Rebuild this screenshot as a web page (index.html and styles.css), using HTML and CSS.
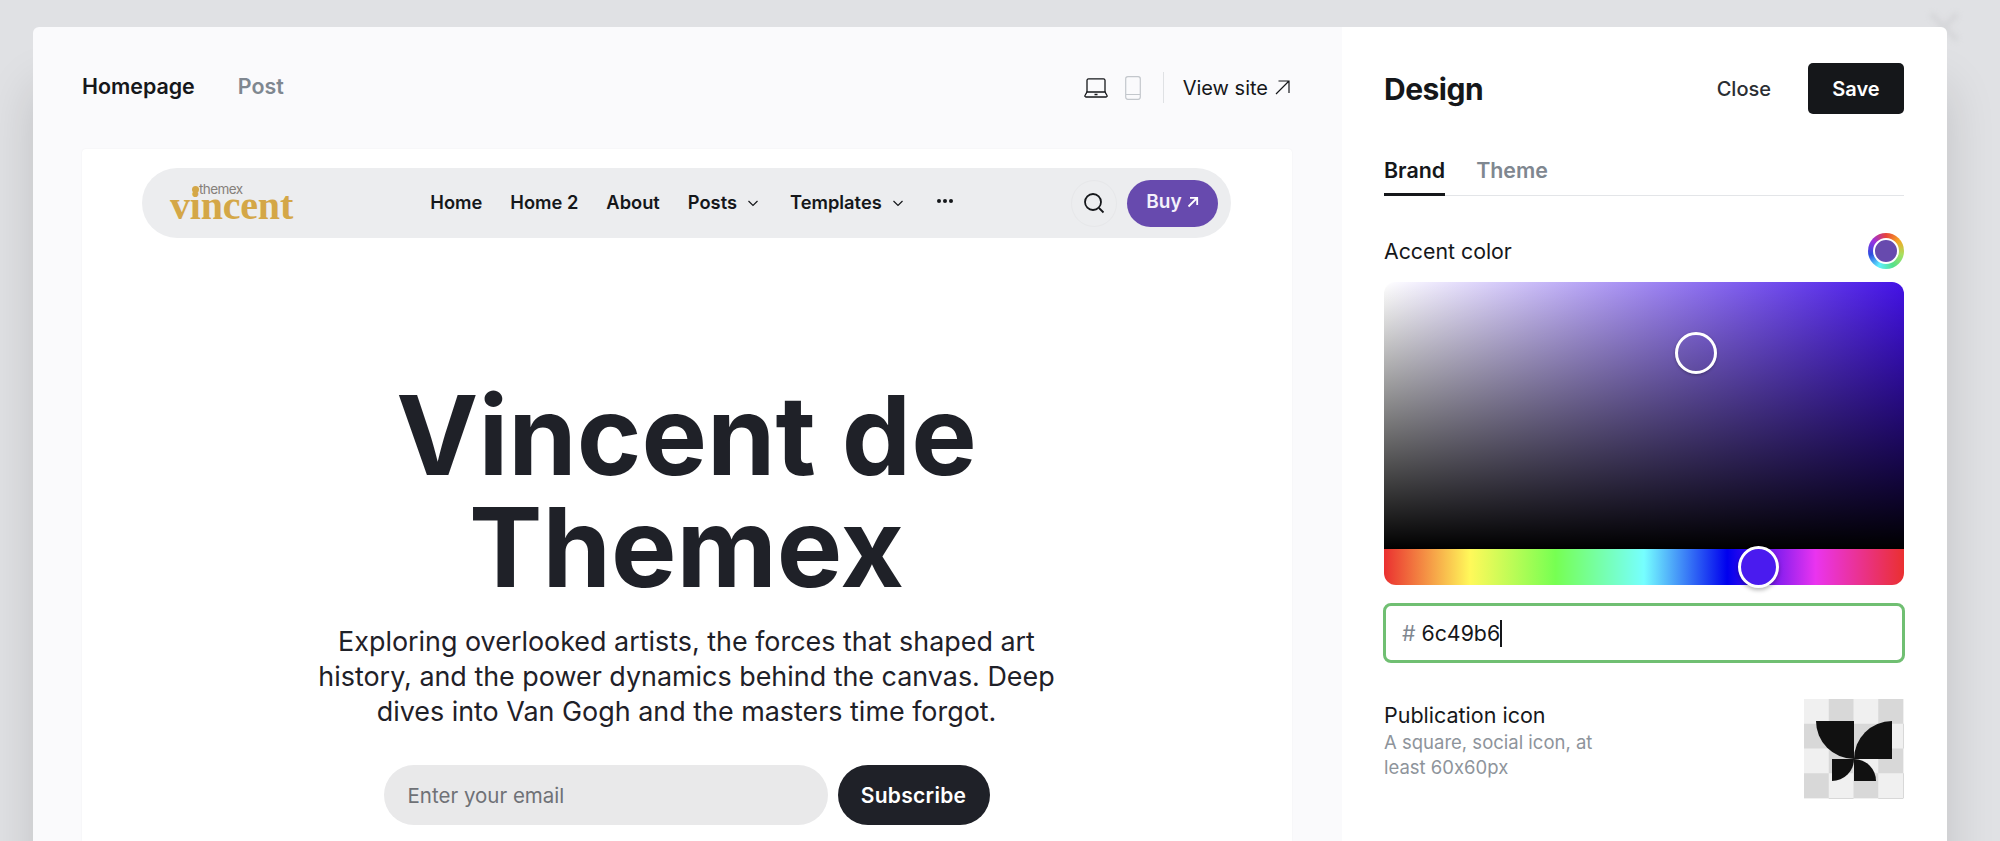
FILE: index.html
```html
<!DOCTYPE html>
<html lang="en">
<head>
<meta charset="utf-8">
<title>Design</title>
<link rel="stylesheet" href="styles.css">
</head>
<body>
<svg class="bg-close" viewBox="0 0 34 34" width="34" height="34"><path d="M4 4L30 30M30 4L4 30"/></svg>
<div class="modal">
  <main class="preview-pane">
    <header class="pane-top">
      <div class="page-tabs">
        <span class="page-tab active">Homepage</span>
        <span class="page-tab">Post</span>
      </div>
      <div class="pane-tools">
        <svg class="laptop" viewBox="0 0 24 20" width="24" height="20" fill="none" stroke="#15171a" stroke-width="1.3"><path d="M3 14V2.2A1.5 1.5 0 0 1 4.5.8h15A1.5 1.5 0 0 1 21 2.2V14"/><path d="M3 14h18l2 3.5a1 1 0 0 1-.9 1.5H1.9a1 1 0 0 1-.9-1.5z"/><path d="M10.5 16.5h3" stroke-width="1.5"/></svg>
        <svg class="phone" viewBox="0 0 16 24" width="16" height="24" fill="none" stroke="#c3c7cc" stroke-width="1.2"><rect x=".7" y=".7" width="14.6" height="22.6" rx="2.2"/><path d="M1 18.5h14"/></svg>
        <span class="tool-divider"></span>
        <span class="view-site">View site
          <svg viewBox="0 0 15 15" width="15" height="15" fill="none" stroke="#15171a" stroke-width="1.2"><path d="M1 14L14 1M3.5 1H14V13"/></svg>
        </span>
      </div>
    </header>
    <section class="site">
      <nav class="site-nav">
        <div class="logo"><span class="logo-dot"></span><span class="logo-small">themex</span><span class="logo-big">vincent</span></div>
        <div class="nav-links">
          <span>Home</span>
          <span>Home 2</span>
          <span>About</span>
          <span class="has-caret posts">Posts <svg viewBox="0 0 12 7" width="12" height="7" fill="none" stroke="#15171a" stroke-width="1.2"><path d="M1.5 1l4.5 4.5L10.5 1"/></svg></span>
          <span class="has-caret templates">Templates <svg viewBox="0 0 12 7" width="12" height="7" fill="none" stroke="#15171a" stroke-width="1.2"><path d="M1.5 1l4.5 4.5L10.5 1"/></svg></span>
          <svg class="dots" viewBox="0 0 16 4" width="16" height="4" fill="#15171a"><circle cx="2" cy="2" r="2"/><circle cx="8" cy="2" r="2"/><circle cx="14" cy="2" r="2"/></svg>
        </div>
        <div class="nav-actions">
          <span class="search-btn"><svg viewBox="0 0 22 22" width="22" height="22" fill="none" stroke="#15171a" stroke-width="1.8"><circle cx="10" cy="10" r="8"/><path d="M16 16l4.5 4.5"/></svg></span>
          <span class="buy-btn">Buy <svg viewBox="0 0 12 12" width="12" height="12" fill="none" stroke="#fff" stroke-width="1.8"><path d="M1.5 10.5L10 2M3 1.8h7.2V9"/></svg></span>
        </div>
      </nav>
      <div class="hero">
        <h1>Vincent de<br>Themex</h1>
        <p>Exploring overlooked artists, the forces that shaped art<br>history, and the power dynamics behind the canvas. Deep<br>dives into Van Gogh and the masters time forgot.</p>
        <form class="subscribe">
          <span class="email">Enter your email</span>
          <span class="subscribe-btn">Subscribe</span>
        </form>
      </div>
    </section>
  </main>
  <aside class="design-pane">
    <header class="design-top">
      <h2>Design</h2>
      <div class="design-actions">
        <span class="close">Close</span>
        <span class="save">Save</span>
      </div>
    </header>
    <div class="tabs">
      <span class="tab active">Brand</span>
      <span class="tab">Theme</span>
    </div>
    <div class="accent-row">
      <span>Accent color</span>
      <span class="swatch"><span class="swatch-inner"></span></span>
    </div>
    <div class="picker">
      <div class="saturation"><span class="sat-thumb"></span></div>
      <div class="hue"><span class="hue-thumb"></span></div>
    </div>
    <div class="hex-input"><span class="hash">#</span><span class="hex-value">6c49b6</span><span class="caret"></span></div>
    <div class="icon-row">
      <div class="icon-text">
        <div class="icon-title">Publication icon</div>
        <div class="icon-desc">A square, social icon, at<br>least 60x60px</div>
      </div>
      <div class="icon-box">
        <svg viewBox="0 0 100 100" width="100" height="100" fill="#111"><path d="M12 22H50V60A38 38 0 0 1 12 22Z"/><path d="M88 22V60H50A38 38 0 0 1 88 22Z"/><path d="M28 60H50A22 22 0 0 1 28 82Z"/><path d="M50 60A22 22 0 0 1 72 82H50Z"/></svg>
      </div>
    </div>
  </aside>
</div>
</body>
</html>
```
FILE: styles.css
```css
* { box-sizing: border-box; }
html, body { height: 100%; }
body {
  margin: 0;
  overflow: hidden;
  background: #e0e1e4;
  font-family: Inter, "Liberation Sans", sans-serif;
  color: #15171a;
  position: relative;
}
.bg-close {
  position: absolute;
  left: 1927px;
  top: 10px;
  filter: blur(2.5px);
}
.bg-close path { stroke: #d6d7da; stroke-width: 6; fill: none; }
.modal {
  position: relative;
  display: flex;
  width: 1914px;
  height: 814px;
  margin: 27px 0 0 33px;
  border-radius: 6px 6px 0 0;
  overflow: hidden;
  box-shadow: 0 60px 50px rgba(0, 0, 0, .14);
}
.preview-pane {
  width: 1309px;
  padding: 0 50px 0 49px;
  background: #fafafc;
  flex: none;
}
.pane-top {
  display: flex;
  justify-content: space-between;
  align-items: center;
  height: 122px;
  padding-bottom: 1px;
}
.page-tabs { display: flex; gap: 43px; font-size: 21.4px; font-weight: 600; color: #7f8790; margin-top: -4px; }
.page-tab.active { color: #15171a; }
.pane-tools { display: flex; align-items: center; margin-right: 2px; }
.laptop { margin-right: 17px; }
.tool-divider { width: 1px; height: 31px; background: #dfe1e4; margin: 0 19px 0 22px; }
.view-site { display: flex; align-items: center; gap: 7px; font-size: 20px; }
.site {
  background: #fff;
  height: 692px;
  border-radius: 4px 4px 0 0;
  padding: 19px 61px 0 60px;
  box-shadow: 0 0 2px rgba(0, 0, 0, .06);
}
.site-nav {
  display: flex;
  align-items: center;
  justify-content: space-between;
  height: 70px;
  background: #ecedef;
  border-radius: 35px;
  padding: 0 13px 0 28px;
}
.logo { position: relative; width: 125px; height: 38px; }
.logo-big {
  position: absolute;
  left: 0;
  bottom: -4px;
  font-family: "Liberation Serif", serif;
  font-weight: 700;
  font-size: 40px;
  letter-spacing: -.2px;
  line-height: 1;
  color: #d4a747;
}
.logo-small {
  position: absolute;
  left: 29px;
  top: -1px;
  font-size: 13.5px;
  letter-spacing: -.6px;
  line-height: 1;
  color: #85807a;
  z-index: 1;
}
.logo-dot {
  position: absolute;
  left: 22px;
  top: 2px;
  width: 7px;
  height: 7px;
  border-radius: 50%;
  background: #d4a747;
}
.nav-links { display: flex; align-items: center; gap: 28px; font-size: 18.3px; font-weight: 600; margin: -2px 0 0 17px; }
.has-caret { display: inline-flex; align-items: center; gap: 10px; }
.has-caret svg { margin-top: 3px; }
.posts { margin-right: 3px; }
.templates { margin-right: 5px; }
.dots { margin-top: -2px; }
.nav-actions { display: flex; align-items: center; gap: 10px; }
.search-btn {
  display: flex;
  align-items: center;
  justify-content: center;
  width: 46px;
  height: 47px;
  border: 1px solid #e6e7e9;
  border-radius: 50%;
}
.buy-btn {
  display: flex;
  align-items: center;
  justify-content: center;
  gap: 5px;
  width: 91px;
  height: 47px;
  padding-bottom: 3px;
  border-radius: 24px;
  background: #674aae;
  color: #f4f0fb;
  font-size: 19px;
  font-weight: 600;
}
.hero { text-align: center; padding-top: 141px; }
.hero h1 {
  margin: 0;
  font-size: 110px;
  line-height: 112px;
  font-weight: 700;
  letter-spacing: 0;
  color: #1f2128;
}
.hero p {
  margin: 21px 0 0;
  font-size: 26.9px;
  line-height: 35px;
  color: #1f2128;
}
.subscribe { display: flex; justify-content: center; gap: 10px; margin-top: 36px; }
.email {
  display: flex;
  align-items: center;
  width: 444px;
  height: 60px;
  padding-left: 24px;
  border-radius: 30px;
  background: #e9e9ea;
  font-size: 20.5px;
  color: #6f7176;
}
.subscribe-btn {
  display: flex;
  align-items: center;
  justify-content: center;
  width: 152px;
  height: 60px;
  border-radius: 30px;
  background: #1f2128;
  color: #fff;
  font-size: 21px;
  letter-spacing: .3px;
  font-weight: 600;
}
.design-pane {
  flex: 1;
  background: #fff;
  padding: 36px 43px 0 42px;
}
.design-top { display: flex; justify-content: space-between; align-items: center; height: 51px; }
.design-top h2 { margin: 0; font-size: 30px; font-weight: 700; letter-spacing: -.5px; }
.design-actions { display: flex; align-items: center; gap: 37px; }
.close { font-size: 20px; font-weight: 500; color: #2b2e33; }
.save {
  display: flex;
  align-items: center;
  justify-content: center;
  width: 96px;
  height: 51px;
  border-radius: 5px;
  background: #15171a;
  color: #fff;
  font-size: 20px;
  font-weight: 600;
}
.tabs {
  display: flex;
  gap: 31px;
  margin-top: 32px;
  height: 50px;
  border-bottom: 1px solid #e3e5e8;
  font-size: 21.4px;
  font-weight: 600;
  color: #7f8790;
}
.tab { height: 50px; padding-top: 11px; }
.tab.active { color: #15171a; border-bottom: 3px solid #15171a; }
.accent-row {
  display: flex;
  justify-content: space-between;
  align-items: center;
  margin-top: 37px;
  height: 36px;
  font-size: 21.3px;
}
.swatch {
  display: flex;
  align-items: center;
  justify-content: center;
  width: 36px;
  height: 36px;
  border-radius: 50%;
  background: conic-gradient(#e8433a, #f5a623, #a8e05f, #54e08a, #5ff0ff, #2b4fe0, #9a2fe0, #e8433a);
}
.swatch-inner {
  box-sizing: content-box;
  width: 22px;
  height: 22px;
  border-radius: 50%;
  background: #674aae;
  border: 2px solid #fff;
}
.picker { margin-top: 13px; border-radius: 12px; }
.saturation {
  position: relative;
  height: 267px;
  border-radius: 12px 12px 0 0;
  background: linear-gradient(to top, #000, rgba(0, 0, 0, 0)), linear-gradient(to right, #fff, #4312e6);
}
.sat-thumb {
  position: absolute;
  left: 291px;
  top: 50px;
  width: 42px;
  height: 42px;
  border-radius: 50%;
  border: 3px solid #fff;
  box-shadow: 0 1px 3px rgba(0, 0, 0, .3);
}
.hue {
  position: relative;
  height: 36px;
  border-radius: 0 0 12px 12px;
  background: linear-gradient(to right, #ea3030, #fff95a 16.6%, #76ff52 33%, #76ffff 50%, #0000ee 66%, #ea34ef 83%, #ea3030);
}
.hue-thumb {
  position: absolute;
  left: 354px;
  top: -3px;
  width: 41px;
  height: 42px;
  border-radius: 50%;
  background: #4a1bef;
  border: 3px solid #fff;
  box-shadow: 0 2px 4px rgba(0, 0, 0, .3);
}
.hex-input {
  display: flex;
  align-items: center;
  margin: 18px -1px 0;
  height: 60px;
  padding-left: 16px;
  border: 3px solid #70bf72;
  border-radius: 8px;
  font-size: 21.3px;
}
.hash { color: #7f8790; margin-right: 6px; }
.caret { width: 1.5px; height: 27px; background: #15171a; }
.icon-row { display: flex; justify-content: space-between; margin-top: 36px; }
.icon-title { font-size: 21.5px; margin-top: 3px; line-height: 27px; }
.icon-desc { font-size: 18.5px; line-height: 25px; color: #8e949b; margin-top: 1px; font-feature-settings: "calt" 0; }
.icon-box {
  width: 100px;
  height: 100px;
  background: repeating-conic-gradient(#d8d8d8 0 25%, #f0f0f0 0 50%) 0 0 / 49.5px 49.5px;
}
.icon-box svg { display: block; }
```
